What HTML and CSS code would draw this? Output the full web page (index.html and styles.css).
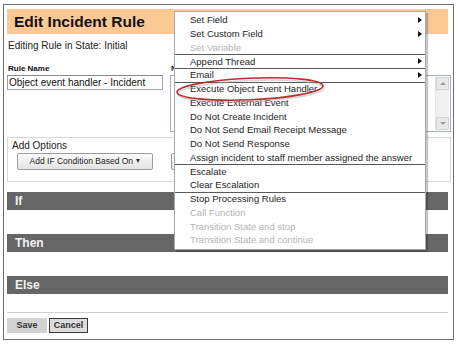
FILE: index.html
```html
<!DOCTYPE html>
<html>
<head>
<meta charset="utf-8">
<link rel="stylesheet" href="styles.css">
</head>
<body>
<div class="frame">
  <div class="header"><h1 class="title">Edit Incident Rule</h1></div>
  <div class="state">Editing Rule in State: Initial</div>
  <div class="fields">
    <div class="field name-field">
      <div class="label">Rule Name</div>
      <div class="input">Object event handler - Incident</div>
    </div>
    <div class="field notes-field">
      <div class="label">N</div>
      <div class="textarea">
        <div class="scrollbar">
          <span class="sb-btn"><span class="sb-up"></span></span>
          <span class="sb-track"></span>
          <span class="sb-btn"><span class="sb-down"></span></span>
        </div>
      </div>
    </div>
  </div>
  <div class="options">
    <div class="options-title">Add Options</div>
    <div class="options-buttons">
      <div class="btn">Add IF Condition Based On <span class="caret"></span></div>
      <div class="btn btn-wide"></div>
    </div>
  </div>
  <div class="section">If</div>
  <div class="section">Then</div>
  <div class="section">Else</div>
  <div class="footer">
    <div class="fbtn save">Save</div>
    <div class="fbtn cancel">Cancel</div>
  </div>
</div>

<div class="menu">
  <div class="item"><span>Set Field</span><span class="arrow"></span></div>
  <div class="item"><span>Set Custom Field</span><span class="arrow"></span></div>
  <div class="item disabled"><span>Set Variable</span></div>
  <div class="item sep"><span>Append Thread</span><span class="arrow"></span></div>
  <div class="item sep"><span>Email</span><span class="arrow"></span></div>
  <div class="item sep"><span>Execute Object Event Handler</span></div>
  <div class="item"><span>Execute External Event</span></div>
  <div class="item"><span>Do Not Create Incident</span></div>
  <div class="item"><span>Do Not Send Email Receipt Message</span></div>
  <div class="item"><span>Do Not Send Response</span></div>
  <div class="item"><span>Assign incident to staff member assigned the answer</span></div>
  <div class="item sep"><span>Escalate</span></div>
  <div class="item"><span>Clear Escalation</span></div>
  <div class="item sep"><span>Stop Processing Rules</span></div>
  <div class="item disabled"><span>Call Function</span></div>
  <div class="item disabled"><span>Transition State and stop</span></div>
  <div class="item disabled"><span>Transition State and continue</span></div>
</div>

<svg class="highlight" width="170" height="40" viewBox="0 0 170 40">
  <ellipse cx="81" cy="19" rx="73" ry="10.5" transform="rotate(-2.5 81 19)" fill="none" stroke="#a0a0a0" stroke-width="1.6" opacity="0.45"/>
  <ellipse cx="80" cy="17" rx="73" ry="10.8" transform="rotate(-2.5 80 17)" fill="none" stroke="#b7302e" stroke-width="1.6"/>
</svg>
</body>
</html>
```

FILE: styles.css
```css
html, body {
  margin: 0;
  padding: 0;
  background: #ffffff;
}
body {
  width: 458px;
  height: 345px;
  overflow: hidden;
  font-family: "Liberation Sans", Arial, sans-serif;
  color: #222;
}
.frame {
  margin: 4px 0 0 3px;
  width: 451px;
  height: 336px;
  box-sizing: border-box;
  border: 1px solid #6e6e6e;
  padding: 4px 0 0 3px;
}
.header {
  width: 441px;
  height: 25px;
  background: #fcc894;
  display: flex;
  align-items: center;
  padding-left: 7px;
  box-sizing: border-box;
}
.title {
  margin: 0;
  font-size: 15.5px;
  font-weight: bold;
  color: #111;
  line-height: 18px;
}
.state {
  margin-top: 5px;
  font-size: 10px;
  line-height: 14px;
  color: #222;
  padding-left: 1px;
}
.fields {
  margin-top: 11px;
  display: flex;
  gap: 7px;
}
.label {
  font-size: 8px;
  font-weight: bold;
  line-height: 10px;
  color: #111;
  padding-left: 1px;
  margin-bottom: 1px;
}
.name-field { width: 156px; }
.input {
  width: 156px;
  height: 15px;
  box-sizing: border-box;
  border: 1px solid #a0a0a0;
  border-top-color: #8a8a8a;
  font-size: 10px;
  line-height: 13px;
  padding-left: 1px;
  color: #111;
}
.notes-field { width: 281px; }
.textarea {
  width: 281px;
  height: 57px;
  box-sizing: border-box;
  border: 1px solid #9fb2c8;
  display: flex;
  justify-content: flex-end;
  padding: 1px;
}
.scrollbar {
  width: 13px;
  display: flex;
  flex-direction: column;
  background: #f0f0f0;
  border-left: 1px solid #e2e2e2;
}
.sb-btn {
  height: 13px;
  display: flex;
  align-items: center;
  justify-content: center;
  background: #e9e9e9;
  border: 1px solid #d3d3d3;
  box-sizing: border-box;
}
.sb-track { flex: 1; }
.sb-up {
  width: 0; height: 0;
  border-left: 3px solid transparent;
  border-right: 3px solid transparent;
  border-bottom: 3px solid #9a9a9a;
}
.sb-down {
  width: 0; height: 0;
  border-left: 3px solid transparent;
  border-right: 3px solid transparent;
  border-top: 3px solid #9a9a9a;
}
.options {
  margin-top: 5px;
  width: 444px;
  height: 45px;
  box-sizing: border-box;
  border: 1px solid #d8d8d8;
  padding: 2px 0 0 4px;
}
.options-title {
  font-size: 10px;
  line-height: 12px;
  color: #222;
}
.options-buttons {
  margin-top: 1px;
  display: flex;
  gap: 18px;
  padding-left: 5px;
}
.btn {
  width: 136px;
  height: 17px;
  box-sizing: border-box;
  border: 1px solid #9c9c9c;
  border-radius: 2px;
  background: linear-gradient(#fbfbfb, #e3e3e3);
  font-size: 8.5px;
  line-height: 15px;
  text-align: center;
  color: #222;
}
.btn-wide { width: 150px; }
.caret {
  display: inline-block;
  width: 0; height: 0;
  border-left: 2.5px solid transparent;
  border-right: 2.5px solid transparent;
  border-top: 4px solid #333;
  vertical-align: 1px;
  margin-left: 1px;
}
.section {
  margin-top: 10px;
  width: 441px;
  height: 18px;
  box-sizing: border-box;
  background: #666666;
  color: #f2f2f2;
  font-size: 12px;
  font-weight: bold;
  line-height: 18px;
  padding-left: 8px;
}
.section + .section { margin-top: 24px; }
.footer {
  margin-top: 18px;
  width: 441px;
  border-top: 1px solid #cfcfcf;
  padding-top: 5px;
  display: flex;
  gap: 2px;
}
.fbtn {
  height: 15px;
  box-sizing: border-box;
  font-size: 9px;
  font-weight: bold;
  color: #333;
  text-align: center;
  line-height: 13px;
}
.save {
  width: 40px;
  background: #d2d2d2;
  border: 1px solid #d2d2d2;
}
.cancel {
  width: 39px;
  background: #dcdcdc;
  border: 1px solid #3a3a3a;
}
.menu {
  position: absolute;
  left: 174px;
  top: 11px;
  width: 252px;
  height: 239px;
  box-sizing: border-box;
  background: #ffffff;
  border: 1px solid #a8a8a8;
  box-shadow: 2px 2px 1px rgba(0, 0, 0, 0.22);
  padding-top: 1px;
}
.item {
  height: 13.75px;
  display: flex;
  align-items: center;
  justify-content: space-between;
  padding: 0 3px 0 15px;
  font-size: 9.5px;
  line-height: 13px;
  color: #1e1e1e;
  white-space: nowrap;
}
.item.sep { box-shadow: inset 0 1px 0 #5a5a5a; }
.item.disabled { color: #b4b4b4; }
.arrow {
  width: 0; height: 0;
  border-top: 3.5px solid transparent;
  border-bottom: 3.5px solid transparent;
  border-left: 4px solid #111;
}
.highlight {
  position: absolute;
  left: 170px;
  top: 72px;
  overflow: visible;
}
```
